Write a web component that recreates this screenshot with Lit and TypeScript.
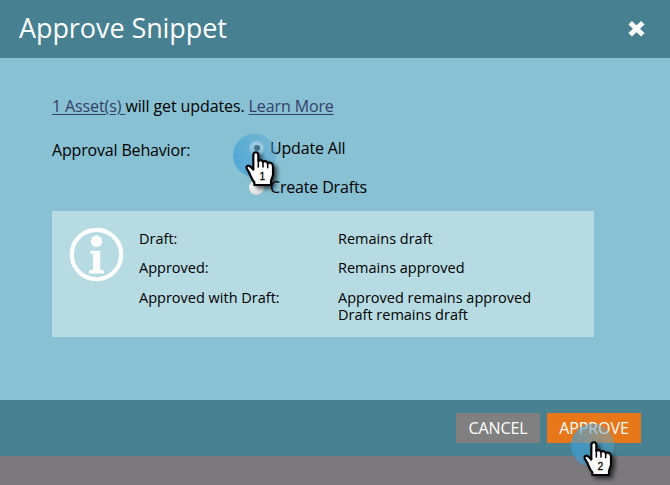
import { LitElement, html, css } from "lit";
import { customElement, property } from "lit/decorators.js";

@customElement("step-pointer")
class StepPointer extends LitElement {
  @property() step = "1";

  static styles = css`
    :host { display: block; width: 80px; height: 80px; pointer-events: none; }
    svg { display: block; overflow: visible; }
    text { font: 31px "Liberation Sans", Arial, sans-serif; fill: #000; stroke: #000; stroke-width: 0.8; }
  `;

  render() {
    return html`<svg width="80" height="80" viewBox="0 0 240 240">
      <defs>
        <linearGradient id="halo" x1="0" y1="0.75" x2="1" y2="0.25">
          <stop offset="0" stop-color="#3a9dd6" stop-opacity="0.72" />
          <stop offset="0.45" stop-color="#48a3d6" stop-opacity="0.62" />
          <stop offset="1" stop-color="#5ca9cf" stop-opacity="0.4" />
        </linearGradient>
        <filter id="shade" x="-40%" y="-40%" width="200%" height="200%">
          <feDropShadow dx="9" dy="8" stdDeviation="7" flood-color="#000" flood-opacity="0.65" />
        </filter>
      </defs>
      <circle cx="89" cy="82" r="65" fill="url(#halo)" />
      <path
        d="M85 81C85 70 100 70 100 81V99C105 94 112 96 114 102C119 97 127 100 128 106C134 101 143 105 144 114V139C144 149 138 152 138 160V171H88V163C80 154 77 144 73 135C70 128 62 122 65 116C69 109 77 114 85 125Z"
        fill="#fff" stroke="#000" stroke-width="6.5" stroke-linejoin="round" filter="url(#shade)" />
      <path d="M100 97V117M114 102V117M128 106V119" fill="none" stroke="#000" stroke-width="4.5" stroke-linecap="round" />
      <text x="112" y="155" text-anchor="middle">${this.step}</text>
    </svg>`;
  }
}

@customElement("app-root")
class AppRoot extends LitElement {
  static styles = css`
    :host {
      display: flex; flex-direction: column; position: relative;
      width: 670px; height: 485px; overflow: hidden; box-sizing: border-box;
      background: #7c797e; color: #000; font: 16px/22px "Open Sans", "Noto Sans", sans-serif;
    }
    header {
      height: 58px; box-sizing: border-box; padding: 0 25px 2px 19px; background: #468091;
      display: flex; align-items: center; justify-content: space-between;
      color: #fff; font-size: 27px; line-height: 38px; letter-spacing: -0.08px;
    }
    header svg { display: block; }
    main { height: 342px; box-sizing: border-box; padding: 37px 76px 0 52px; background: #88c1d3; letter-spacing: -0.11px; }
    .summary { white-space: pre; }
    .link { color: #34406a; text-decoration: underline; text-underline-offset: 2px; }
    .behavior { display: grid; grid-template-columns: 197px 1fr; margin-top: 20px; letter-spacing: -0.17px; }
    .label { padding-top: 2px; }
    .options { display: grid; gap: 17px; }
    .option { display: flex; align-items: center; gap: 6px; }
    .radio {
      width: 15px; height: 15px; border-radius: 50%;
      background: radial-gradient(circle at 40% 35%, #fff, #e4e4e4 60%, #bbb);
      display: grid; place-items: center;
    }
    .checked::after { content: ""; width: 6px; height: 6px; border-radius: 50%; background: #333; }
    .info {
      display: grid; grid-template-columns: 87px 1fr; height: 126px; margin-top: 13px;
      box-sizing: border-box; padding-top: 16px; background: #b6dbe3;
      font-size: 14.5px; line-height: 17px; letter-spacing: 0;
    }
    .info svg { margin-left: 17px; }
    .facts { display: grid; grid-template-columns: 199px 1fr; row-gap: 12.5px; align-content: start; padding-top: 2.5px; }
    .line { display: block; }
    footer {
      height: 56px; box-sizing: border-box; padding: 0 29px 0 0; background: #468091;
      display: flex; align-items: center; justify-content: flex-end; gap: 7px;
    }
    .button { height: 30px; width: 84px; line-height: 30px; text-align: center; color: #fff; background: #808080; letter-spacing: -0.1px; }
    .primary { width: 94px; background: #e8771a; }
    step-pointer { position: absolute; }
    .first { left: 225px; top: 128px; }
    .second { left: 563px; top: 417.5px; }
  `;

  render() {
    return html`
      <header>
        <span class="title">Approve Snippet</span>
        <svg width="17" height="17" viewBox="0 0 17 17"><path d="M2.2 2.7L14.8 14.7M14.8 2.7L2.2 14.7" stroke="#fff" stroke-width="5" /></svg>
      </header>
      <main>
        <div class="summary"><span class="link">1 Asset(s) </span><span>will get updates.</span> <span class="link">Learn More</span></div>
        <div class="behavior">
          <span class="label">Approval Behavior:</span>
          <div class="options">
            <div class="option"><span class="radio checked"></span><span>Update All</span></div>
            <div class="option"><span class="radio"></span><span>Create Drafts</span></div>
          </div>
        </div>
        <div class="info">
          <svg width="55" height="55" viewBox="0 0 55 55">
            <circle cx="27.5" cy="27.5" r="24.7" fill="none" stroke="#fff" stroke-width="4.2" />
            <circle cx="27.5" cy="14.3" r="5.7" fill="#fff" />
            <path d="M21.5 23.8H31.2V42.6L35 43.5V46.5H20V43.5L24 42.6V27L21.5 26.3Z" fill="#fff" />
          </svg>
          <div class="facts">
            <span>Draft:</span><span>Remains draft</span>
            <span>Approved:</span><span>Remains approved</span>
            <span>Approved with Draft:</span>
            <div><span class="line">Approved remains approved</span><span class="line">Draft remains draft</span></div>
          </div>
        </div>
      </main>
      <footer>
        <span class="button">CANCEL</span>
        <span class="button primary">APPROVE</span>
      </footer>
      <step-pointer class="first" step="1"></step-pointer>
      <step-pointer class="second" step="2"></step-pointer>
    `;
  }
}
